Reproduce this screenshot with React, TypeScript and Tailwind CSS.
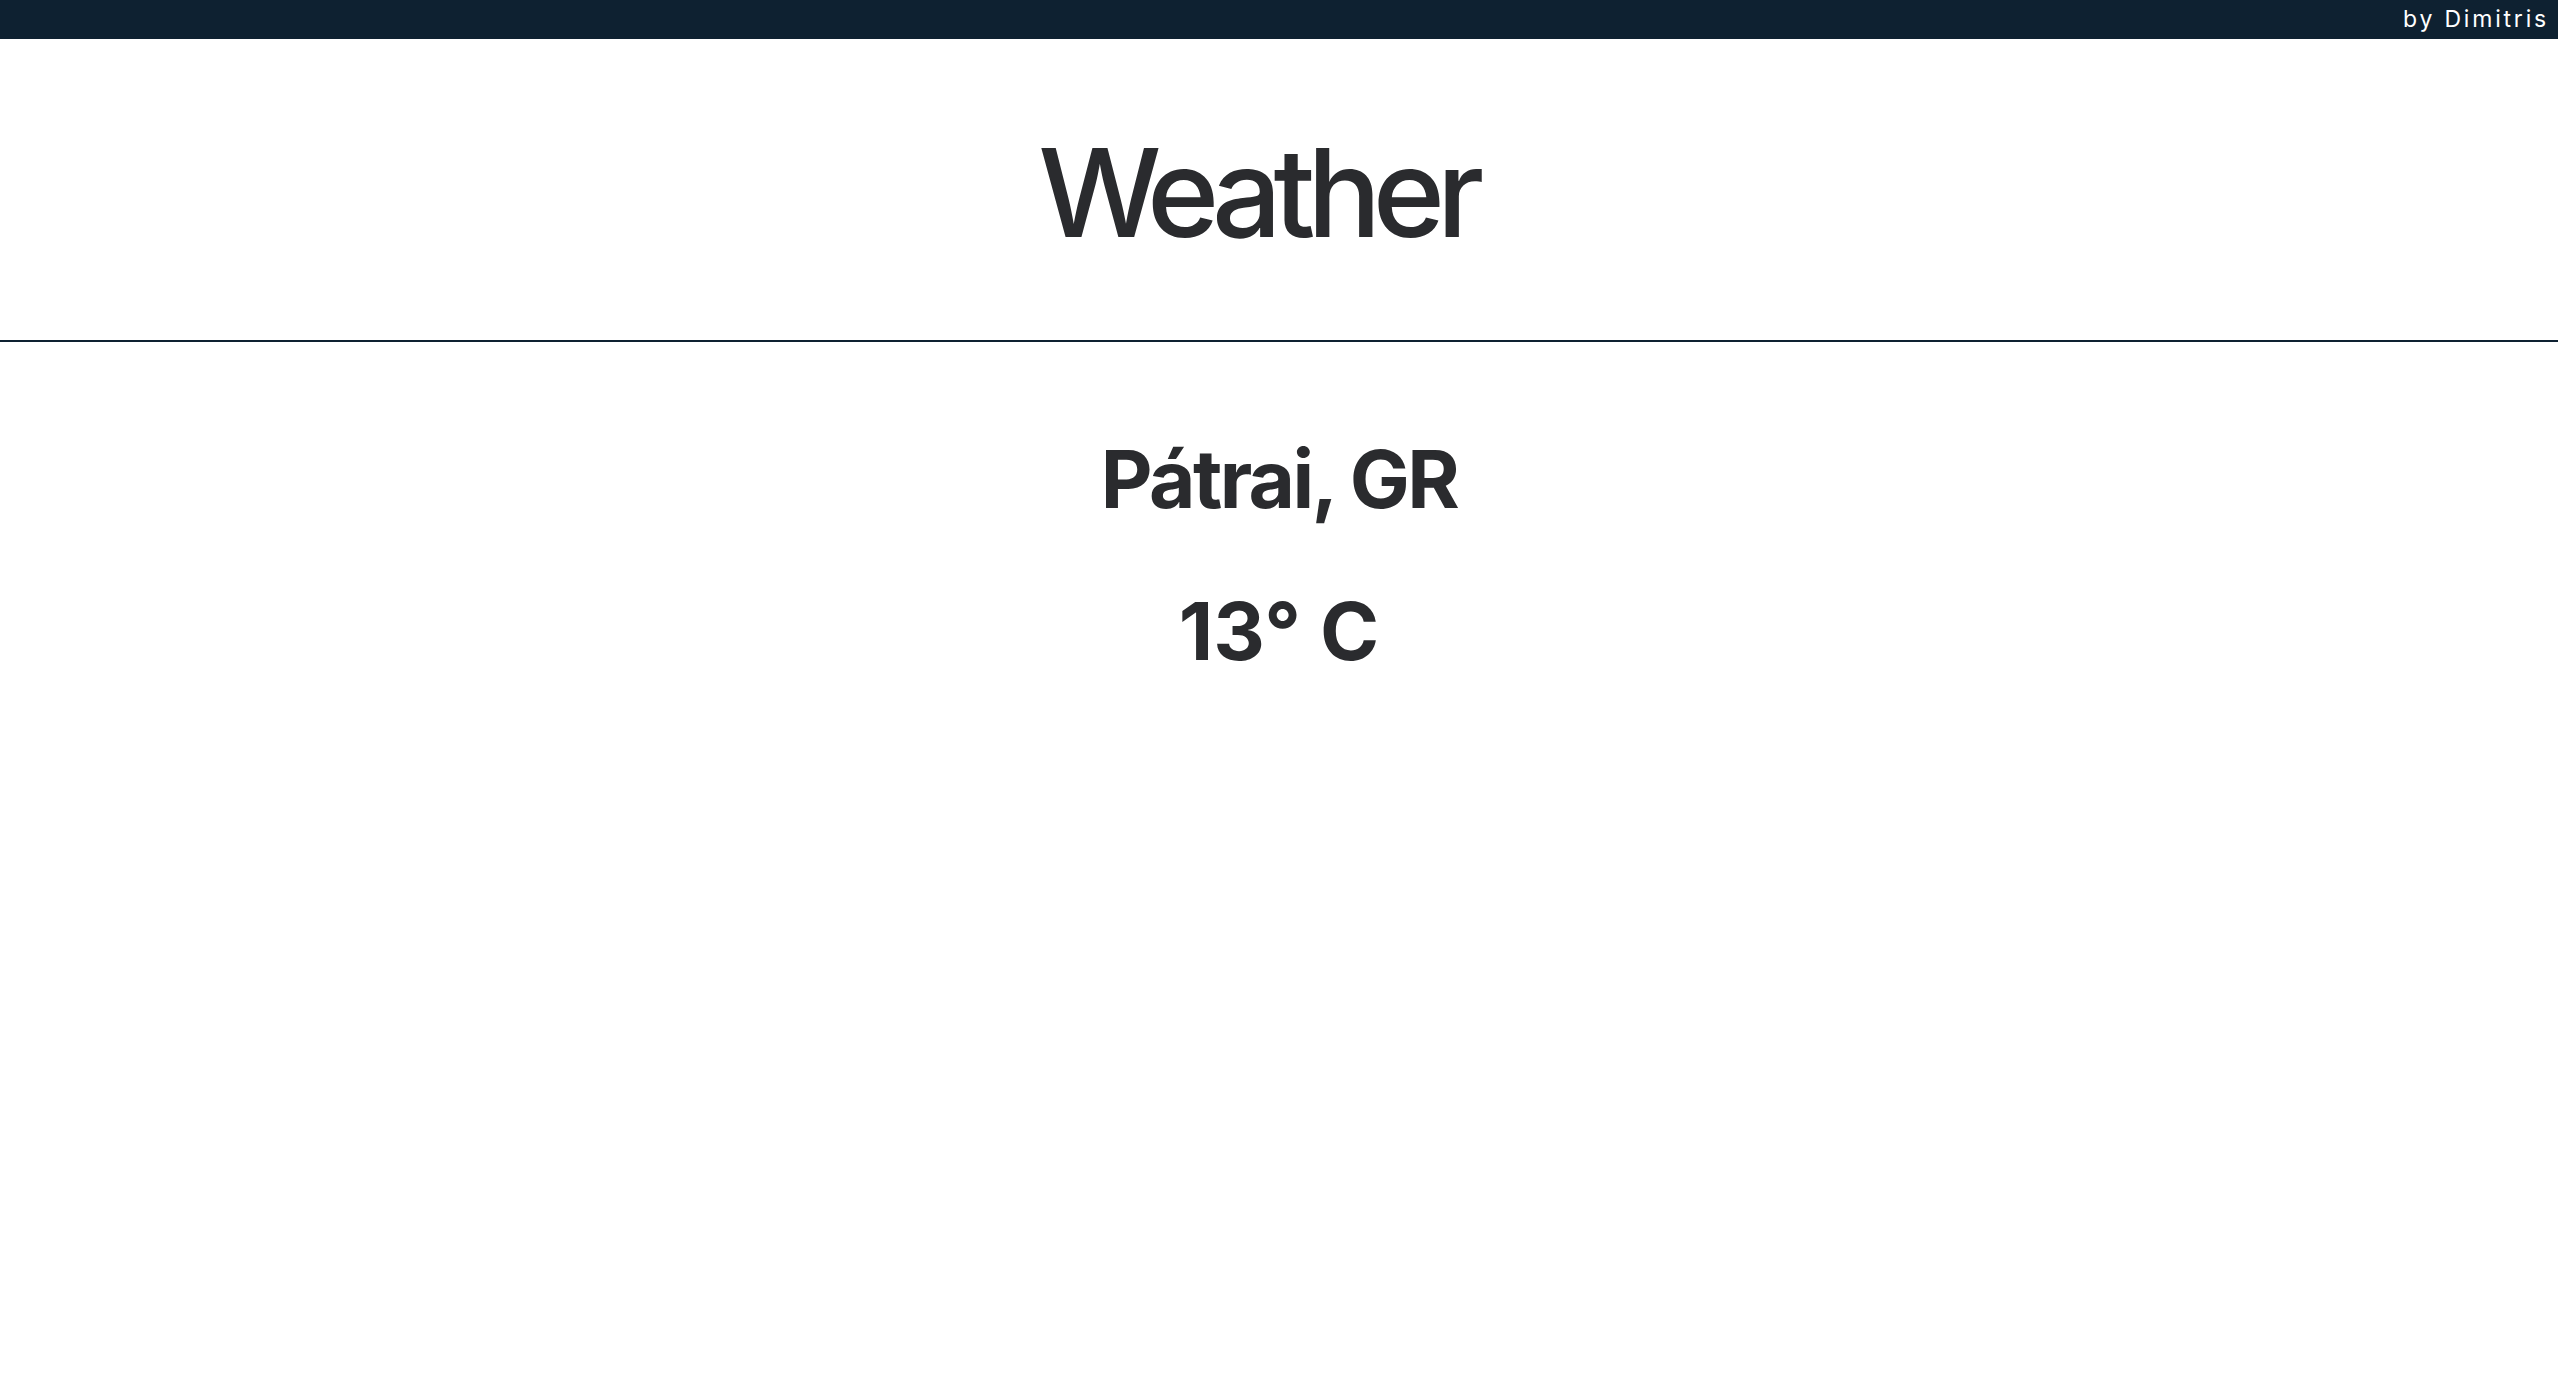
export default function App() {
  return (
    <div className="min-h-screen bg-white font-['Inter','Liberation_Sans',sans-serif] text-[#2a2b2e]">
      <div className="flex h-[39px] items-center justify-end bg-[#0e2131] pr-[9px]">
        <span className="text-[23px] leading-none tracking-[2.8px] text-white">by Dimitris</span>
      </div>

      <header className="border-b-2 border-[#0e2131] pt-[92px] pb-[86px]">
        <h1 className="pr-[44px] text-center text-[123px] leading-none font-medium tracking-[-0.068em]">
          Weather
        </h1>
      </header>

      <main className="flex flex-col items-center pt-[97px]">
        <h2 className="text-[80px] leading-none font-bold tracking-[-0.032em]">Pátrai, GR</h2>
        <p className="mt-[72px] text-[80px] leading-none font-bold">13° C</p>
      </main>
    </div>
  );
}
